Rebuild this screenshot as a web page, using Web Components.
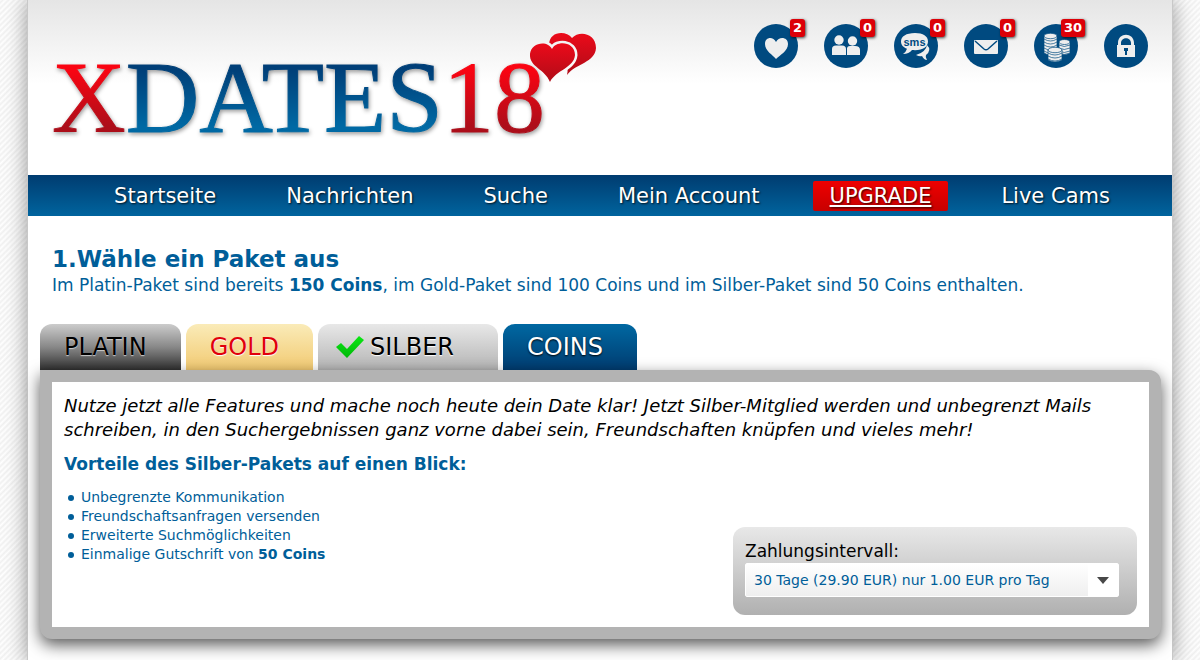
<!DOCTYPE html>
<html lang="de">
<head>
<meta charset="utf-8">
<meta name="viewport" content="width=device-width, initial-scale=1">
<title>XDATES18 – Upgrade</title>
<style>
body{margin:0;font-family:"DejaVu Sans",Verdana,sans-serif;color:#000;--blue:#005e99}
</style>
</head>
<body>
<site-page>
  <site-header>
    <site-logo></site-logo>
    <status-icon slot="status" icon="heart" label="Favoriten">2</status-icon>
    <status-icon slot="status" icon="friends" label="Freunde">0</status-icon>
    <status-icon slot="status" icon="sms" label="SMS">0</status-icon>
    <status-icon slot="status" icon="mail" label="Nachrichten">0</status-icon>
    <status-icon slot="status" icon="coins" label="Coins">30</status-icon>
    <status-icon slot="status" icon="lock" label="Abmelden"></status-icon>
  </site-header>
  <site-nav>
    <a href="#start">Startseite</a>
    <a href="#messages">Nachrichten</a>
    <a href="#search">Suche</a>
    <a href="#account">Mein Account</a>
    <a href="#upgrade" class="upgrade">UPGRADE</a>
    <a href="#cams">Live Cams</a>
  </site-nav>
  <step-heading>
    <span slot="title">1.Wähle ein Paket aus</span>
    Im Platin-Paket sind bereits <b>150 Coins</b>, im Gold-Paket sind 100 Coins und im Silber-Paket sind 50 Coins enthalten.
  </step-heading>
  <package-picker>
    <package-tab slot="tab" kind="platin">PLATIN</package-tab>
    <package-tab slot="tab" kind="gold">GOLD</package-tab>
    <package-tab slot="tab" kind="silber" selected>SILBER</package-tab>
    <package-tab slot="tab" kind="coins">COINS</package-tab>
    <package-panel>
      <span slot="intro">Nutze jetzt alle Features und mache noch heute dein Date klar! Jetzt Silber-Mitglied werden und unbegrenzt Mails schreiben, in den Suchergebnissen ganz vorne dabei sein, Freundschaften knüpfen und vieles mehr!</span>
      <benefit-list heading="Vorteile des Silber-Pakets auf einen Blick:">
        <span>Unbegrenzte Kommunikation</span>
        <span>Freundschaftsanfragen versenden</span>
        <span>Erweiterte Suchmöglichkeiten</span>
        <span>Einmalige Gutschrift von <b>50 Coins</b></span>
      </benefit-list>
      <interval-picker slot="aside"></interval-picker>
    </package-panel>
  </package-picker>
</site-page>

<script>
const define = (name, html, setup) => {
  const template = document.createElement('template');
  template.innerHTML = html;
  customElements.define(name, class extends HTMLElement {
    constructor() {
      super();
      this.attachShadow({mode: 'open'}).append(template.content.cloneNode(true));
    }
    connectedCallback() {
      if (setup) setup(this, this.shadowRoot);
    }
  });
};

define('site-page', `
<style>
:host{display:block;min-height:100vh;padding:0 27px;box-sizing:border-box;overflow:hidden;
  background:repeating-linear-gradient(135deg,#fff 0,#f0f0f0 2px,#fff 4px)}
.frame{min-height:100vh;box-sizing:border-box;background:#fff;border:solid #c8c8c8;border-width:0 1px;
  box-shadow:0 0 20px rgba(0,0,0,.4)}
</style>
<div class="frame"><slot></slot></div>`);

define('site-header', `
<style>
:host{display:block;background:linear-gradient(#e5e5e5,#fff 84px)}
header{display:flex;justify-content:space-between;align-items:flex-start;padding:24px 24px 27px}
.status{display:flex;gap:26px}
</style>
<header><slot></slot><div class="status"><slot name="status"></slot></div></header>`);

define('site-logo', `
<style>
:host{display:block;padding-top:24px}
a{display:block;position:relative;text-decoration:none;font:102px/100px "Liberation Serif","Times New Roman",serif}
.word{display:block;filter:drop-shadow(1px 2px 2px rgba(0,0,0,.4))}
.word span{color:transparent;-webkit-text-stroke:1px transparent;-webkit-background-clip:text;background-clip:text}
.red{background-image:linear-gradient(#fa0412 25%,#ac0e1a 76%)}
.blue{background-image:linear-gradient(#003f78 25%,#0069a4 76%)}
svg{position:absolute;left:calc(100% - 18px);top:-18px;width:72px;height:56px}
</style>
<a href="#start"><span class="word"><span class="red">X</span><span class="blue">DATES</span><span class="red">18</span></span>
<svg viewBox="524 30 72 56" aria-hidden="true">
  <defs>
    <linearGradient id="h" x1="0" y1="0" x2="0" y2="1"><stop offset="0" stop-color="#ec0a1a"/><stop offset="1" stop-color="#b00c18"/></linearGradient>
    <mask id="m" maskUnits="userSpaceOnUse" x="524" y="30" width="72" height="56"><rect x="524" y="30" width="72" height="56" fill="#fff"/>
      <path fill="#000" stroke="#000" stroke-width="5" d="M549 49C545 40 528 42 527 54C526 67 542 69 547 82C553 70 571 68 572 55C572 41 553 40 549 49Z"/></mask>
  </defs>
  <path mask="url(#m)" fill="url(#h)" d="M569 38C563 30 546 31 546 45C546 59 569 57 564 75C573 63 592 63 593 48C593 33 576 30 569 38Z"/>
  <path fill="url(#h)" d="M549 49C545 40 528 42 527 54C526 67 542 69 547 82C553 70 571 68 572 55C572 41 553 40 549 49Z"/>
</svg></a>`);

const glyphs = {
  heart: '<path d="M22 35C19 31 11 27 11 20C11 13 19 12 22 18C25 12 34 13 34 20C34 27 26 31 22 35Z"/>',
  friends: '<circle cx="15" cy="16" r="4.7"/><circle cx="28.500" cy="17" r="4.700"/><path d="M8 31V25Q8 21.500 12 21.500H18Q22 21.500 22 25V31ZM23 31V26Q22.500 22 26 22H31Q36 22 36 26V31Z"/>',
  sms: '<path d="M36 22Q35 29 25 32Q29 34 31 33Q33 37 36 37Q34 34 35 32Q41 27 36 22Z" transform="translate(-3 -1)"/><path d="M21 9C12 9 7 12.500 7 17.500C7 21 9.500 23.500 13 24.700Q12 28 9 30Q15 30 18 26C28 27 34 23 34 17.500C34 12 29 9 21 9Z"/><text x="20.500" y="21.500" text-anchor="middle" font-family="Liberation Sans, Arial, sans-serif" font-weight="700" font-size="11" style="fill:#004a80">sms</text>',
  mail: '<rect x="10" y="16" width="24" height="14" rx="1"/><path d="M11 17L20 25Q22 26.500 24 25L33 17" fill="none" stroke="#004a80" stroke-width="1.500"/>',
  coins: '<g stroke="#004a80" stroke-width=".7"><path d="M10 12V29Q16 33 23 29V12Z"/><ellipse cx="16.500" cy="12" rx="6.500" ry="2.700"/><path fill="none" d="M10 15q6.500 4 13 0M10 18q6.500 4 13 0M10 21q6.500 4 13 0M10 24q6.500 4 13 0M10 27q6.500 4 13 0"/><path d="M25 18V29Q30 32 36 29V18Z"/><ellipse cx="30.500" cy="18" rx="5.500" ry="2.500"/><path fill="none" d="M25 21q5 3 11 0M25 24q5 3 11 0M25 27q5 3 11 0"/><path d="M14 26V36Q21 40 28 36V26Z"/><ellipse cx="21" cy="26" rx="7" ry="2.700"/><path fill="none" d="M14 29q7 4 14 0M14 32q7 4 14 0M14 35q7 4 14 0"/></g>',
  lock: '<path fill-rule="evenodd" d="M13 21H14V19C14 8 30 8 30 19V21H31V33H13ZM17 21H27V19C27 12.500 17 12.500 17 19Z"/><path fill="#004a80" d="M20 24h4v3h-1v4h-2v-4h-1z"/>'
};
define('status-icon', `
<style>
:host{display:block}
a{display:block;position:relative;width:44px;height:44px;border-radius:50%;background:#004a80}
svg{display:block;width:44px;height:44px;fill:#eee}
.badge{position:absolute;right:-7px;top:-5px;padding:0 3px;border-radius:3px;background:#dc0008;color:#fff;
  font-size:13px;line-height:18px;font-weight:700;box-shadow:1px 1px 3px rgba(0,0,0,.7)}
.badge[hidden]{display:none}
</style>
<a href="#"><svg viewBox="0 0 44 44" aria-hidden="true"></svg><span class="badge"><slot></slot></span></a>`,
(host, root) => {
  root.querySelector('svg').innerHTML = glyphs[host.getAttribute('icon')];
  root.querySelector('a').setAttribute('aria-label', host.getAttribute('label'));
  root.querySelector('.badge').hidden = !host.textContent;
});

define('site-nav', `
<style>
:host{display:block;background:linear-gradient(#003c70,#00649e)}
nav{display:flex;justify-content:center;align-items:center;gap:36px;height:41px;padding-left:24px}
::slotted(a){padding:0 17px;color:#fff;text-decoration:none;font-size:21px;line-height:30px;white-space:nowrap;
  text-shadow:1px 1px 2px rgba(0,0,0,.8)}
::slotted(a.upgrade){background:linear-gradient(#ee0000,#c80000);border-radius:2px;text-decoration:underline}
</style>
<nav><slot></slot></nav>`);

define('step-heading', `
<style>
:host{display:block;padding:28px 24px 0;color:var(--blue)}
h1{margin:0;font-size:23px;line-height:30px}
p{margin:0;font-size:17px;line-height:22px}
</style>
<h1><slot name="title"></slot></h1><p><slot></slot></p>`);

define('package-picker', `
<style>
:host{display:block;padding:28px 11px 22px 12px}
.tabs{display:flex;gap:5px;position:relative}
</style>
<div class="tabs" role="tablist"><slot name="tab"></slot></div><slot></slot>`);

define('package-tab', `
<style>
:host{display:block}
button{display:flex;align-items:center;gap:6px;height:46px;padding:0 34px 0 24px;border:0;border-radius:12px 12px 0 0;
  font:24px/46px "DejaVu Sans",Verdana,sans-serif;color:#000;cursor:pointer}
svg{display:none;width:28px;height:24px}
:host([kind=platin]) button{background:linear-gradient(#ccc,#888 50%,#303030);text-shadow:0 1px 1px #ccc}
:host([kind=gold]) button{background:linear-gradient(#faebb8,#f2ca72);color:#e0000c;text-shadow:0 1px 1px #fff}
:host([kind=silber]) button{background:linear-gradient(#e8e8e8,#b4b4b4);text-shadow:0 1px 1px #fff}
:host([kind=coins]) button{background:linear-gradient(#0068a2,#003c70);color:#fff;text-shadow:0 1px 2px #000}
:host([selected]) button{padding:0 44px 0 18px}
:host([selected]) svg{display:block}
</style>
<button type="button" role="tab"><svg viewBox="0 0 28 24" aria-hidden="true"><defs><linearGradient id="g" x1="0" y1="0" x2="0" y2="1"><stop offset="0" stop-color="#0be814"/><stop offset="1" stop-color="#00b808"/></linearGradient></defs><path fill="url(#g)" d="M0 12L5 8L11 14L23 1L28 5L11 23Z"/></svg><slot></slot></button>`,
(host, root) => root.querySelector('button').setAttribute('aria-selected', host.hasAttribute('selected')));

define('package-panel', `
<style>
:host{display:block;position:relative}
section{display:flex;flex-direction:column;min-height:245px;box-sizing:content-box;border:12px solid #b3b3b3;
  border-radius:0 12px 12px 12px;background:#b3b3b3;box-shadow:0 6px 16px rgba(0,0,0,.65)}
.body{flex:1;display:flex;flex-direction:column;background:#fff;padding:12px}
p{margin:0 0 12px;font-size:18px;line-height:24px;font-style:italic}
.row{flex:1;display:flex;justify-content:space-between;gap:24px}
::slotted([slot=aside]){align-self:flex-end}
</style>
<section role="tabpanel"><div class="body"><p><slot name="intro"></slot></p>
<div class="row"><slot></slot><slot name="aside"></slot></div></div></section>`);

define('benefit-list', `
<style>
:host{display:block;color:var(--blue)}
h2{margin:0 0 14px;font-size:17px;line-height:20px}
ul{margin:0;padding:0 0 0 17px;list-style:none;font-size:14px;line-height:19px}
li{position:relative}
li::before{content:"";position:absolute;left:-13px;top:7px;width:6px;height:6px;border-radius:50%;background:var(--blue)}
</style>
<h2></h2><ul></ul>`,
(host, root) => {
  root.querySelector('h2').textContent = host.getAttribute('heading');
  [...host.children].forEach((item, i) => {
    item.slot = 'item' + i;
    const li = document.createElement('li');
    const slot = document.createElement('slot');
    slot.name = item.slot;
    li.append(slot);
    root.querySelector('ul').append(li);
  });
});

define('interval-picker', `
<style>
:host{display:block;flex:0 1 404px;box-sizing:border-box;padding:12px 18px 18px 12px;border-radius:12px;
  background:linear-gradient(#e8e8e8,#b0b0b0)}
label{display:block;font-size:17px;line-height:24px}
.field{position:relative;display:block}
select{display:block;appearance:none;width:100%;height:34px;padding:0 32px 0 8px;border:1px solid #fff;border-radius:2px;
  background:linear-gradient(90deg,transparent calc(100% - 30px),#fff 0),linear-gradient(#fff,#efefef);
  color:var(--blue);font:14px "DejaVu Sans",Verdana,sans-serif}
svg{position:absolute;right:10px;top:14px;width:12px;height:7px;pointer-events:none}
</style>
<label for="interval">Zahlungsintervall:</label>
<div class="field"><select id="interval"><option>30 Tage (29.90 EUR) nur 1.00 EUR pro Tag</option></select>
<svg viewBox="0 0 12 7" aria-hidden="true"><path fill="#484848" d="M0 0H12L6 7Z"/></svg></div>`);
</script>
</body>
</html>
